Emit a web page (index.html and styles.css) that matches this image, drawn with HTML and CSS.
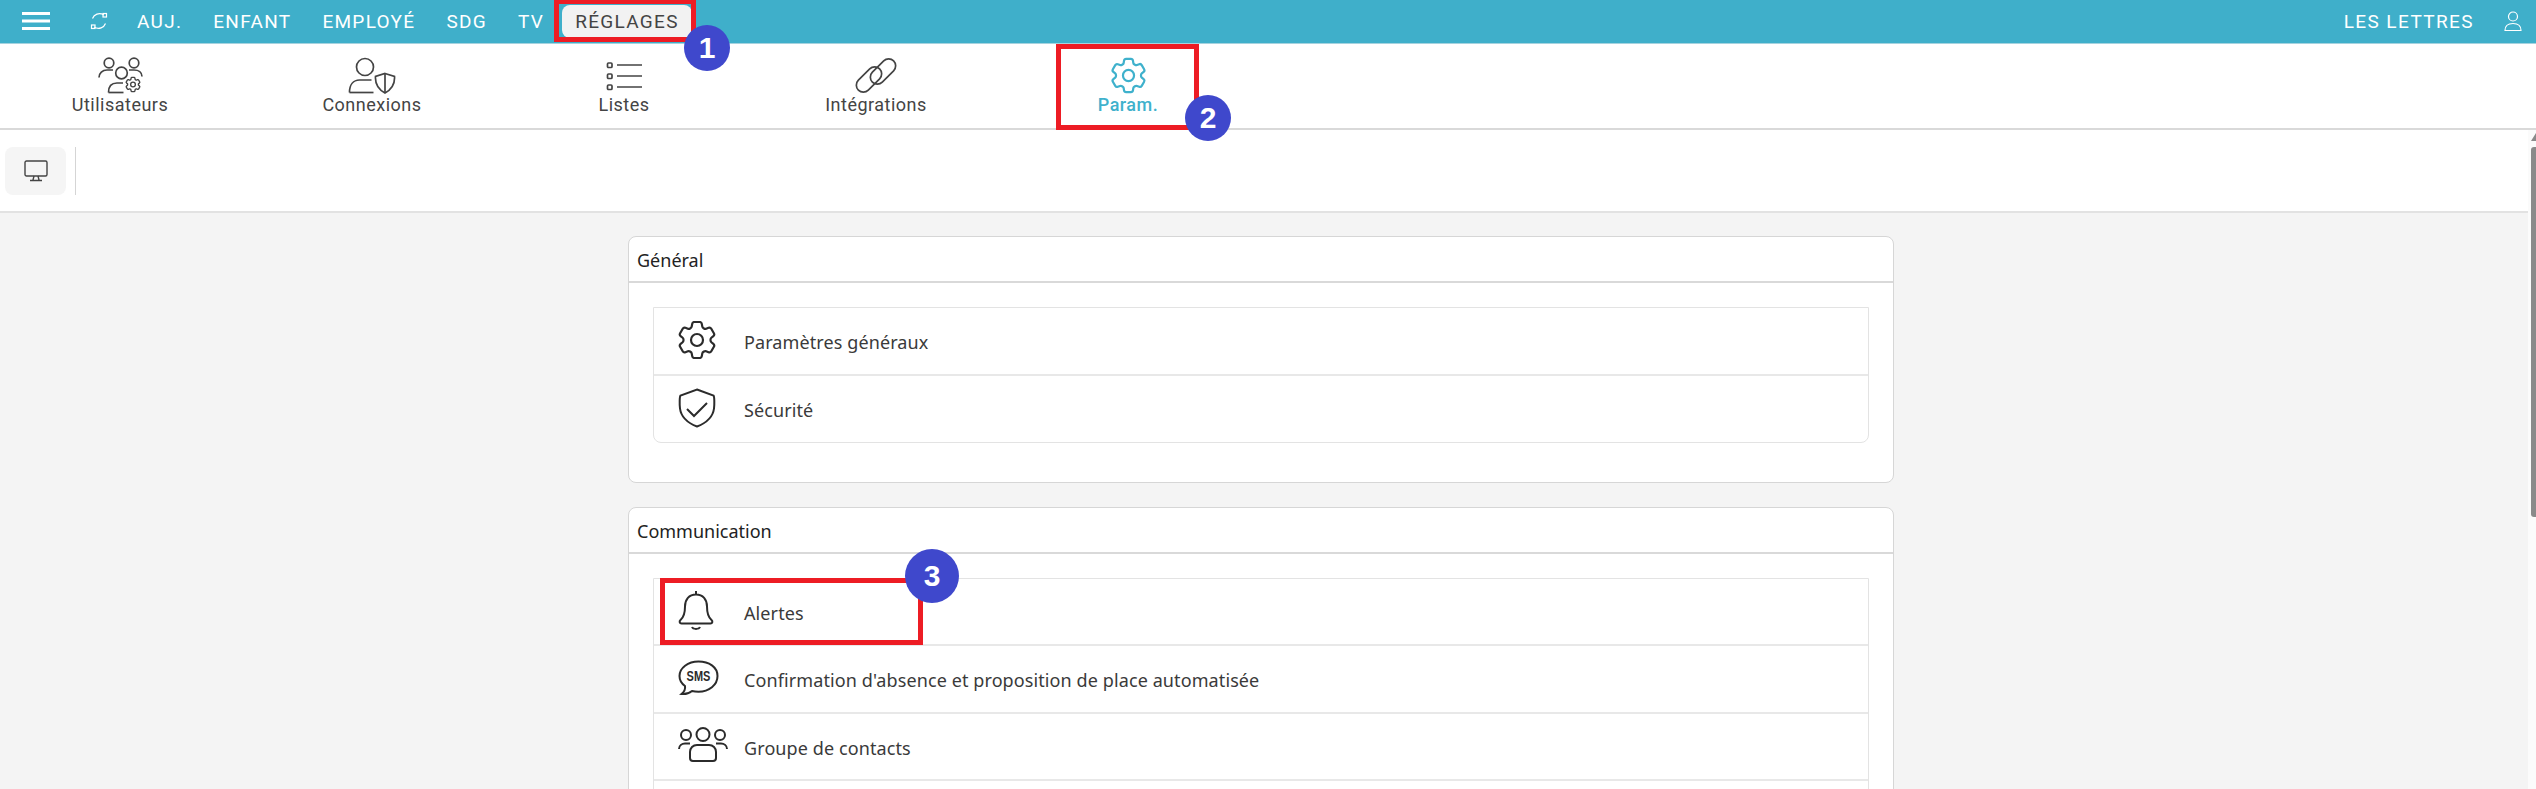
FILE: index.html
```html
<!doctype html>
<html lang="fr">

<head>
    <meta charset="UTF-8">
    <title>Réglages</title>
    <link rel="stylesheet" href="styles.css">
</head>

<body>
    <svg class="sprite" aria-hidden="true">
        <symbol id="cog" viewBox="0 0 24 24">
            <path d="M9.594 3.94c.09-.542.56-.94 1.11-.94h2.593c.55 0 1.02.398 1.11.94l.213 1.281c.063.374.313.686.645.87.074.04.147.083.22.127.325.196.72.257 1.075.124l1.217-.456a1.125 1.125 0 0 1 1.37.49l1.296 2.247a1.125 1.125 0 0 1-.26 1.431l-1.003.827c-.293.241-.438.613-.43.992a7.723 7.723 0 0 1 0 .255c-.008.378.137.75.43.991l1.004.827c.424.35.534.955.26 1.43l-1.298 2.247a1.125 1.125 0 0 1-1.369.491l-1.217-.456c-.355-.133-.75-.072-1.076.124a6.47 6.47 0 0 1-.22.128c-.331.183-.581.495-.644.869l-.213 1.281c-.09.543-.56.94-1.11.94h-2.594c-.55 0-1.019-.398-1.11-.94l-.213-1.281c-.062-.374-.312-.686-.644-.87a6.52 6.52 0 0 1-.22-.127c-.325-.196-.72-.257-1.076-.124l-1.217.456a1.125 1.125 0 0 1-1.369-.49l-1.297-2.247a1.125 1.125 0 0 1 .26-1.431l1.004-.827c.292-.24.437-.613.43-.991a6.932 6.932 0 0 1 0-.255c.007-.38-.138-.751-.43-.992l-1.004-.827a1.125 1.125 0 0 1-.26-1.43l1.297-2.247a1.125 1.125 0 0 1 1.37-.491l1.216.456c.356.133.751.072 1.076-.124.072-.044.146-.086.22-.128.332-.183.582-.495.644-.869l.214-1.28Z" />
            <circle cx="12" cy="12" r="3" />
        </symbol>
    </svg>

    <header class="topbar">
        <svg class="menu-icon" viewBox="0 0 28 18">
            <rect width="28" height="3" y="0" />
            <rect width="28" height="3" y="7.5" />
            <rect width="28" height="3" y="15" />
        </svg>
        <svg class="sync-icon" viewBox="0 0 20 18">
            <path d="M3.500 6.500C5 2.500 10 0 15 3" />
            <path d="M16.500 11.500C15 15.500 10 18 5 15" />
            <rect x="14" y="1.500" width="3.500" height="3.500" />
            <rect x="2.500" y="13" width="3.500" height="3.500" />
        </svg>
        <nav class="nav">
            <a class="nav-link">AUJ.</a>
            <a class="nav-link">ENFANT</a>
            <a class="nav-link">EMPLOYÉ</a>
            <a class="nav-link">SDG</a>
            <a class="nav-link">TV</a>
            <a class="nav-link active">RÉGLAGES</a>
        </nav>
        <div class="account">
            <span>LES LETTRES</span>
            <svg class="user-icon" viewBox="0 0 18 20">
                <circle cx="9" cy="5.500" r="4.500" />
                <path d="M1 19.500c0-4.500 3-7 8-7s8 2.500 8 7z" />
            </svg>
        </div>
    </header>

    <div class="tabs">
        <a class="tab">
            <svg class="tab-icon" width="45" height="37" viewBox="0 0 45 37">
                <circle cx="11" cy="6" r="4.800" />
                <circle cx="36" cy="6" r="4.800" />
                <circle cx="23.500" cy="16" r="5.800" />
                <path d="M1 20.500c0-4.500 3.500-7.500 8-7.500h6" />
                <path d="M31 13h5c4.500 0 8 2.500 8 6.500" />
                <path d="M10.500 35.500c0-6 3-9.500 8.500-9.500h6" />
                <path d="M10.500 35.500h15" />
                <use href="#cog" x="25.500" y="18" width="19" height="19" />
            </svg>
            <span>Utilisateurs</span>
        </a>
        <a class="tab">
            <svg class="tab-icon" width="48" height="37" viewBox="0 0 48 37">
                <circle cx="17" cy="10" r="8.500" />
                <path d="M1.500 35.500c0-8 4-12.500 10-12.500h12" />
                <path d="M1.500 35.500h24" />
                <path d="M37 16.500l9.500 3c.5 7-3 13-9.500 16.500-6.500-3.500-10-9.500-9.500-16.500z" />
                <path d="M37 17v19" />
            </svg>
            <span>Connexions</span>
        </a>
        <a class="tab">
            <svg class="tab-icon" width="36" height="37" viewBox="0 0 36 37">
                <rect x="1.500" y="6" width="4.500" height="4.500" rx="1" />
                <rect x="1.500" y="17" width="4.500" height="4.500" rx="1" />
                <rect x="1.500" y="28" width="4.500" height="4.500" rx="1" />
                <path d="M11 8h25M11 19h25M11 30h25" />
            </svg>
            <span>Listes</span>
        </a>
        <a class="tab">
            <svg class="tab-icon" width="44" height="37" viewBox="0 0 44 37">
                <rect x="0" y="15.500" width="30" height="14" rx="7" transform="rotate(-45 15 22.500)" />
                <rect x="14" y="7.500" width="30" height="14" rx="7" transform="rotate(-45 29 14.500)" />
            </svg>
            <span>Intégrations</span>
        </a>
        <a class="tab current">
            <svg class="tab-icon cog-icon" width="37" height="37" viewBox="2 2 20 20">
                <use href="#cog" width="24" height="24" />
            </svg>
            <span>Param.</span>
        </a>
    </div>

    <div class="workspace">
        <div class="main">
            <div class="toolbar">
                <button class="tool-button">
                    <svg class="monitor-icon" viewBox="0 0 24 22">
                        <rect x="1" y="1" width="22" height="15" rx="1.500" />
                        <path d="M10 16l-1 4M14 16l1 4M6 20.500h12" />
                    </svg>
                </button>
                <span class="tool-sep"></span>
            </div>
            <div class="content">
                <section class="card">
                    <h2 class="card-title">Général</h2>
                    <div class="list">
                        <a class="row">
                            <span class="row-icon">
                                <svg class="cog-icon" width="38" height="38" viewBox="2.500 2.500 19 19">
                                    <use href="#cog" width="24" height="24" />
                                </svg>
                            </span>
                            <span>Paramètres généraux</span>
                        </a>
                        <a class="row">
                            <span class="row-icon">
                                <svg width="38" height="40" viewBox="0 0 38 40">
                                    <path d="M19 1.500 35.500 7.500c1 1 1 9 .5 13-1 8-8 14.500-17 18-9-3.500-16-10-17-18-.5-4-.5-12 .5-13z" />
                                    <path d="M9 21l7 7 13-13" />
                                </svg>
                            </span>
                            <span>Sécurité</span>
                        </a>
                    </div>
                </section>
                <section class="card">
                    <h2 class="card-title">Communication</h2>
                    <div class="list">
                        <a class="row">
                            <span class="row-icon">
                                <svg width="36" height="40" viewBox="0 0 36 40">
                                    <path d="M18 1v3.500M18 4.500c-7 0-11 5-11 12 0 7-1.500 11-4.500 13.500-1.500 1.500-1 3.500 1 3.500h29c2 0 2.500-2 1-3.500-3-2.500-4.500-6.500-4.500-13.500 0-7-4-12-11-12z" />
                                    <path d="M14 37c1 2.500 7 2.500 8 0" />
                                </svg>
                            </span>
                            <span>Alertes</span>
                        </a>
                        <a class="row">
                            <span class="row-icon">
                                <svg width="41" height="36" viewBox="0 0 41 36">
                                    <path d="M20.500 1.500C10 1.500 1.500 8 1.500 16c0 4 2 7.500 5.500 10 .5 3-1 6-3.500 8 4 .5 8-1 10.500-3 2 .5 4.200.7 6.500.7 10.500 0 19-6.700 19-15.700S31 1.500 20.500 1.500z" />
                                    <text class="sms-text" x="20.500" y="21" textLength="24" lengthAdjust="spacingAndGlyphs">SMS</text>
                                </svg>
                            </span>
                            <span>Confirmation d'absence et proposition de place automatisée</span>
                        </a>
                        <a class="row">
                            <span class="row-icon">
                                <svg width="50" height="36" viewBox="0 0 50 36">
                                    <circle cx="8" cy="8" r="5" />
                                    <circle cx="25" cy="7.500" r="6.500" />
                                    <circle cx="42" cy="8" r="5" />
                                    <path d="M1 22c0-3.500 3-5.500 6-5.500h5" />
                                    <path d="M38 16.500h5c3 0 6 2 6 5.500" />
                                    <path d="M12 31v-6c0-4 3-7 7-7h12c4 0 7 3 7 7v6c0 2-1 3-3 3H15c-2 0-3-1-3-3z" />
                                </svg>
                            </span>
                            <span>Groupe de contacts</span>
                        </a>
                        <a class="row"></a>
                    </div>
                </section>
            </div>
        </div>
        <div class="scroll-track">
            <span class="scroll-arrow"></span>
            <span class="scroll-thumb"></span>
        </div>
    </div>

    <!-- annotations over the screenshot -->
    <span class="mark mark-reglages"></span>
    <span class="mark mark-param"></span>
    <span class="mark mark-alertes"></span>
    <span class="badge badge-1">1</span>
    <span class="badge badge-2">2</span>
    <span class="badge badge-3">3</span>
</body>

</html>
```

FILE: styles.css
```css
* {
    box-sizing: border-box;
}

html,
body {
    height: 100%;
    margin: 0;
    overflow: hidden;
}

body {
    position: relative;
    display: flex;
    flex-direction: column;
    background: #fff;
    font-family: Roboto, "Noto Sans", sans-serif;
    color: #444;
}

.sprite {
    display: none;
}

/* top bar */
.topbar {
    display: flex;
    align-items: center;
    flex: none;
    height: 44px;
    padding: 0 14px 1px 22px;
    background: #3fafca;
    border-bottom: 1px solid #a5d3df;
    color: #fff;
}

.menu-icon {
    width: 28px;
    height: 18px;
    margin-right: 39px;
    fill: #fff;
}

.sync-icon {
    width: 20px;
    height: 18px;
    margin-right: 15px;
    fill: none;
    stroke: #fff;
    stroke-width: 1.2;
}

.nav {
    display: flex;
    gap: 5px;
}

.nav-link {
    padding: 6px 13px;
    border-radius: 8px;
    font-size: 19px;
    line-height: 21px;
    letter-spacing: 1.3px;
}

.nav-link.active {
    background: #f2f2f2;
    color: #444;
}

.account {
    display: flex;
    align-items: center;
    gap: 30px;
    margin-left: auto;
    font-size: 19px;
    letter-spacing: 1.4px;
}

.user-icon {
    width: 18px;
    height: 20px;
    fill: none;
    stroke: #fff;
    stroke-width: 1.2;
}

/* tabs */
.tabs {
    display: flex;
    flex: none;
    gap: 110px;
    height: 86px;
    padding-left: 49px;
    padding-top: 13px;
    background: #fff;
    border-bottom: 2px solid #d9d9d9;
}

.tab {
    display: flex;
    flex-direction: column;
    align-items: center;
    width: 142px;
    font-size: 18px;
    line-height: 21px;
    letter-spacing: .5px;
    color: #444;
}

.tab-icon {
    fill: none;
    stroke: #444;
    stroke-width: 1.7;
}

.tab .cog-icon {
    stroke-width: 1.200;
}

.tab.current {
    font-weight: 500;
    color: #3fb1cc;
}

.tab.current .tab-icon {
    stroke: #3fb1cc;
}

/* below the tabs */
.workspace {
    display: flex;
    flex: 1;
    min-height: 0;
}

.main {
    display: flex;
    flex-direction: column;
    flex: 1;
    min-width: 0;
}

.toolbar {
    display: flex;
    align-items: center;
    flex: none;
    gap: 9px;
    height: 83px;
    padding-left: 5px;
    border-bottom: 2px solid #e2e2e2;
}

.tool-button {
    display: flex;
    align-items: center;
    justify-content: center;
    width: 61px;
    height: 48px;
    padding: 0;
    border: 0;
    border-radius: 8px;
    background: #f5f5f5;
}

.monitor-icon {
    width: 24px;
    height: 22px;
    fill: none;
    stroke: #444;
    stroke-width: 1.4;
}

.tool-sep {
    width: 1px;
    height: 48px;
    background: #d5d5d5;
}

.content {
    flex: 1;
    padding: 23px 634px 0 628px;
    background: #f4f4f4;
    overflow: hidden;
}

.card {
    margin-bottom: 24px;
    padding-bottom: 39px;
    background: #fff;
    border: 1px solid #d6d6d6;
    border-radius: 8px;
}

.card-title {
    height: 46px;
    margin: 0;
    padding-left: 8px;
    border-bottom: 2px solid #d9d9d9;
    font-family: "Noto Sans", sans-serif;
    font-size: 18px;
    font-weight: 400;
    line-height: 46px;
    color: #222;
}

.list {
    margin: 24px 24px 0;
    border: 1px solid #e3e3e3;
    border-radius: 0 0 8px 8px;
}

.row {
    display: flex;
    align-items: center;
    height: 67.5px;
    padding: 3px 0 0 24px;
    border-bottom: 2px solid #e8e8e8;
    font-family: "Noto Sans", sans-serif;
    font-size: 18px;
    letter-spacing: .1px;
    color: #3a3a3a;
}

.row:last-child {
    height: 66px;
    border-bottom: 0;
}

.row-icon {
    display: flex;
    flex: none;
    width: 66px;
    margin-top: -5px;
}

.row-icon svg {
    fill: none;
    stroke: #2b2b2b;
    stroke-width: 2;
}

.row-icon .cog-icon {
    stroke-width: 1.100;
}

.sms-text {
    fill: #2b2b2b;
    stroke: none;
    font-family: "Liberation Sans", sans-serif;
    font-size: 14px;
    font-weight: 700;
    text-anchor: middle;
}

/* fake scrollbar */
.scroll-track {
    display: flex;
    flex-direction: column;
    flex: none;
    align-items: flex-end;
    width: 8px;
    padding-top: 3px;
    background: #fbfbfb;
}

.scroll-arrow {
    width: 0;
    height: 0;
    border-left: 5px solid transparent;
    border-bottom: 8px solid #8a8a8a;
}

.scroll-thumb {
    width: 5px;
    height: 370px;
    margin-top: 6px;
    border-radius: 3px 0 0 3px;
    background: #8a8a8a;
}

/* annotations */
.mark {
    position: absolute;
    border: 5px solid #ed1c24;
}

.mark-reglages {
    left: 554px;
    top: -1px;
    width: 142px;
    height: 43px;
}

.mark-param {
    left: 1056px;
    top: 44px;
    width: 143px;
    height: 86px;
}

.mark-alertes {
    left: 660px;
    top: 578px;
    width: 263px;
    height: 67px;
}

.badge {
    position: absolute;
    display: flex;
    align-items: center;
    justify-content: center;
    width: 46px;
    height: 46px;
    border-radius: 50%;
    background: #3f48cc;
    color: #fff;
    font-family: "Liberation Sans", sans-serif;
    font-size: 30px;
    font-weight: 700;
}

.badge-1 {
    left: 684px;
    top: 25px;
}

.badge-2 {
    left: 1185px;
    top: 95px;
}

.badge-3 {
    left: 905px;
    top: 549px;
    width: 54px;
    height: 54px;
}
```
